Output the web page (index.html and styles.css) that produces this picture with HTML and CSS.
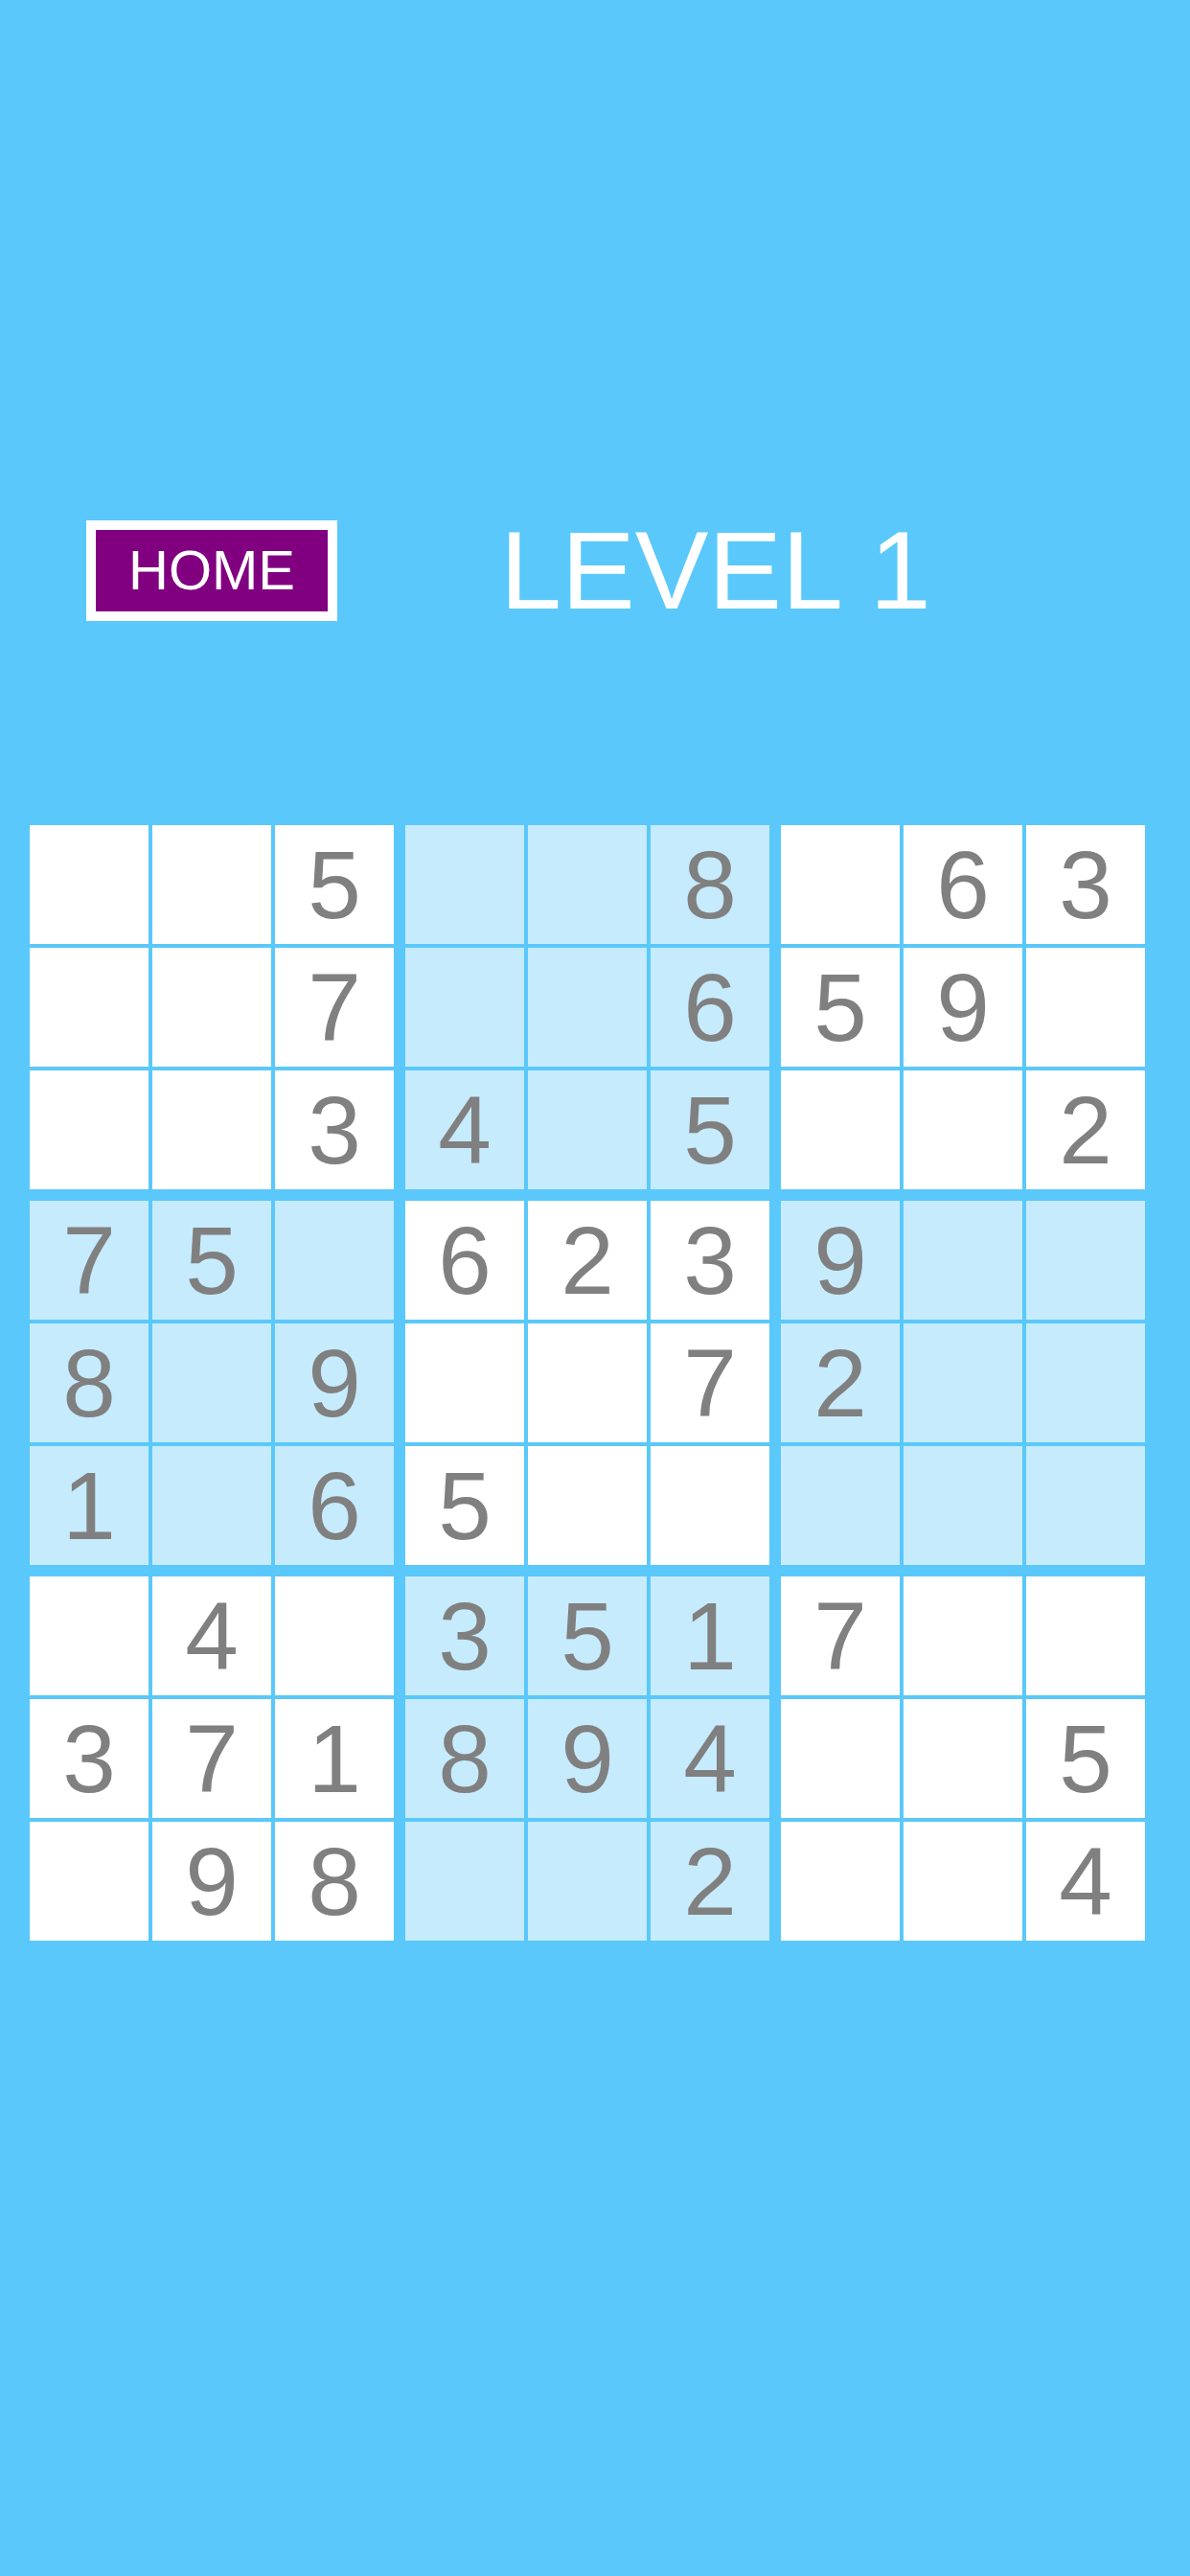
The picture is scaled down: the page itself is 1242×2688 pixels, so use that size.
FILE: index.html
```html
<!DOCTYPE html>
<html lang="en">
<head>
  <meta charset="UTF-8" />
  <meta name="viewport" content="width=device-width, initial-scale=1.0"/>
  <title>Sudoku - Level 1</title>
  <link rel="stylesheet" href="styles.css">
</head>
<body>

  <!-- Top bar -->
  <div class="top-bar">
    <a href="#" class="home-button">HOME</a>
    <h1 class="level-title">LEVEL 1</h1>
  </div>

  <!-- Board -->
  <div class="board">
    <div class="block">
      <div class="cell"></div><div class="cell"></div><div class="cell">5</div>
      <div class="cell"></div><div class="cell"></div><div class="cell">7</div>
      <div class="cell"></div><div class="cell"></div><div class="cell">3</div>
    </div>
    <div class="block shaded">
      <div class="cell"></div><div class="cell"></div><div class="cell">8</div>
      <div class="cell"></div><div class="cell"></div><div class="cell">6</div>
      <div class="cell">4</div><div class="cell"></div><div class="cell">5</div>
    </div>
    <div class="block">
      <div class="cell"></div><div class="cell">6</div><div class="cell">3</div>
      <div class="cell">5</div><div class="cell">9</div><div class="cell"></div>
      <div class="cell"></div><div class="cell"></div><div class="cell">2</div>
    </div>

    <div class="block shaded">
      <div class="cell">7</div><div class="cell">5</div><div class="cell"></div>
      <div class="cell">8</div><div class="cell"></div><div class="cell">9</div>
      <div class="cell">1</div><div class="cell"></div><div class="cell">6</div>
    </div>
    <div class="block">
      <div class="cell">6</div><div class="cell">2</div><div class="cell">3</div>
      <div class="cell"></div><div class="cell"></div><div class="cell">7</div>
      <div class="cell">5</div><div class="cell"></div><div class="cell"></div>
    </div>
    <div class="block shaded">
      <div class="cell">9</div><div class="cell"></div><div class="cell"></div>
      <div class="cell">2</div><div class="cell"></div><div class="cell"></div>
      <div class="cell"></div><div class="cell"></div><div class="cell"></div>
    </div>

    <div class="block">
      <div class="cell"></div><div class="cell">4</div><div class="cell"></div>
      <div class="cell">3</div><div class="cell">7</div><div class="cell">1</div>
      <div class="cell"></div><div class="cell">9</div><div class="cell">8</div>
    </div>
    <div class="block shaded">
      <div class="cell">3</div><div class="cell">5</div><div class="cell">1</div>
      <div class="cell">8</div><div class="cell">9</div><div class="cell">4</div>
      <div class="cell"></div><div class="cell"></div><div class="cell">2</div>
    </div>
    <div class="block">
      <div class="cell">7</div><div class="cell"></div><div class="cell"></div>
      <div class="cell"></div><div class="cell"></div><div class="cell">5</div>
      <div class="cell"></div><div class="cell"></div><div class="cell">4</div>
    </div>
  </div>

</body>
</html>
```

FILE: styles.css
```css
:root {
  --bg-color: #5ac8fa;
  --cell-light: #c6ebfc;
  --digit-color: #808080;
  --home-color: #800080;
}

* {
  box-sizing: border-box;
}

body, html {
  margin: 0;
  padding: 0;
  font-family: 'Liberation Sans', Arial, sans-serif;
  background-color: var(--bg-color);
}

body {
  min-height: 100vh;
  padding-top: 543px;
}

.top-bar {
  display: flex;
  align-items: center;
  padding-left: 90px;
  gap: 170px;
  height: 105px;
}

.home-button {
  display: block;
  background-color: var(--home-color);
  border: 10px solid white;
  color: white;
  font-size: 58px;
  line-height: 1;
  padding: 13px 0;
  text-decoration: none;
  width: 262px;
  height: 105px;
  text-align: center;
}

.level-title {
  margin: 0;
  color: white;
  font-weight: normal;
  font-size: 115px;
  line-height: 0.9;
}

.board {
  display: grid;
  grid-template-columns: repeat(3, 380px);
  gap: 12px;
  margin: 213px 0 0 31px;
}

.block {
  display: grid;
  grid-template-columns: repeat(3, 124px);
  grid-auto-rows: 124px;
  gap: 4px;
}

.cell {
  background-color: white;
  color: var(--digit-color);
  font-size: 100px;
  display: flex;
  justify-content: center;
  align-items: center;
  line-height: 1;
}

.block.shaded .cell {
  background-color: var(--cell-light);
}
```
